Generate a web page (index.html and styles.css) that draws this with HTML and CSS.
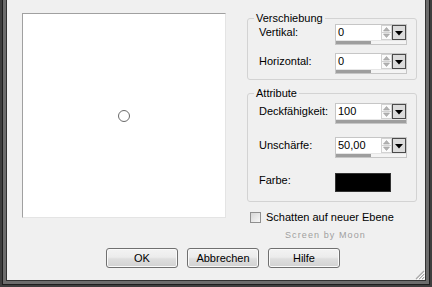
FILE: index.html
```html
<!DOCTYPE html>
<html lang="de">
<head>
<meta charset="utf-8">
<title>Schatten</title>
<link rel="stylesheet" href="styles.css">
</head>
<body>
<div class="window"><div class="frame-a"><div class="frame-b"><div class="client">
  <div class="main">
    <div class="preview">
      <svg class="target" width="14" height="14" viewBox="0 0 14 14"><circle cx="7" cy="7" r="5.5" fill="none" stroke="#6a6a6a" stroke-width="1"/></svg>
    </div>
    <div class="side">
      <fieldset class="group g1">
        <legend>Verschiebung</legend>
        <div class="row">
          <span class="lbl">Vertikal:</span>
          <div class="spin">
            <div class="spin-top">
              <div class="field">0</div>
              <div class="arrows"><svg width="11" height="15" viewBox="0 0 11 15"><rect x="0.5" y="0.5" width="10" height="7" fill="#fbfbfb" stroke="#d2d2d2"/><rect x="0.5" y="7.5" width="10" height="7" fill="#fbfbfb" stroke="#d2d2d2"/><path d="M2.5 6 L5.5 2.5 L8.5 6 Z" fill="#b4b4b4" stroke="#9c9c9c" stroke-width="0.6"/><path d="M2.5 9 L8.5 9 L5.5 12.5 Z" fill="#b4b4b4" stroke="#9c9c9c" stroke-width="0.6"/></svg></div>
              <div class="drop"><svg width="12" height="13" viewBox="0 0 12 13"><path d="M2 5 L10 5 L6 9.5 Z" fill="#000"/></svg></div>
            </div>
            <div class="bar"><div class="fill" style="width:50%"></div></div>
          </div>
        </div>
        <div class="row r-gap1">
          <span class="lbl">Horizontal:</span>
          <div class="spin">
            <div class="spin-top">
              <div class="field">0</div>
              <div class="arrows"><svg width="11" height="15" viewBox="0 0 11 15"><rect x="0.5" y="0.5" width="10" height="7" fill="#fbfbfb" stroke="#d2d2d2"/><rect x="0.5" y="7.5" width="10" height="7" fill="#fbfbfb" stroke="#d2d2d2"/><path d="M2.5 6 L5.5 2.5 L8.5 6 Z" fill="#b4b4b4" stroke="#9c9c9c" stroke-width="0.6"/><path d="M2.5 9 L8.5 9 L5.5 12.5 Z" fill="#b4b4b4" stroke="#9c9c9c" stroke-width="0.6"/></svg></div>
              <div class="drop"><svg width="12" height="13" viewBox="0 0 12 13"><path d="M2 5 L10 5 L6 9.5 Z" fill="#000"/></svg></div>
            </div>
            <div class="bar"><div class="fill" style="width:50%"></div></div>
          </div>
        </div>
      </fieldset>

      <fieldset class="group g2">
        <legend>Attribute</legend>
        <div class="row">
          <span class="lbl">Deckfähigkeit:</span>
          <div class="spin">
            <div class="spin-top">
              <div class="field">100</div>
              <div class="arrows"><svg width="11" height="15" viewBox="0 0 11 15"><rect x="0.5" y="0.5" width="10" height="7" fill="#fbfbfb" stroke="#d2d2d2"/><rect x="0.5" y="7.5" width="10" height="7" fill="#fbfbfb" stroke="#d2d2d2"/><path d="M2.5 6 L5.5 2.5 L8.5 6 Z" fill="#b4b4b4" stroke="#9c9c9c" stroke-width="0.6"/><path d="M2.5 9 L8.5 9 L5.5 12.5 Z" fill="#b4b4b4" stroke="#9c9c9c" stroke-width="0.6"/></svg></div>
              <div class="drop"><svg width="12" height="13" viewBox="0 0 12 13"><path d="M2 5 L10 5 L6 9.5 Z" fill="#000"/></svg></div>
            </div>
            <div class="bar"><div class="fill" style="width:100%"></div></div>
          </div>
        </div>
        <div class="row r-gap2">
          <span class="lbl">Unschärfe:</span>
          <div class="spin">
            <div class="spin-top">
              <div class="field">50,00</div>
              <div class="arrows"><svg width="11" height="15" viewBox="0 0 11 15"><rect x="0.5" y="0.5" width="10" height="7" fill="#fbfbfb" stroke="#d2d2d2"/><rect x="0.5" y="7.5" width="10" height="7" fill="#fbfbfb" stroke="#d2d2d2"/><path d="M2.5 6 L5.5 2.5 L8.5 6 Z" fill="#b4b4b4" stroke="#9c9c9c" stroke-width="0.6"/><path d="M2.5 9 L8.5 9 L5.5 12.5 Z" fill="#b4b4b4" stroke="#9c9c9c" stroke-width="0.6"/></svg></div>
              <div class="drop"><svg width="12" height="13" viewBox="0 0 12 13"><path d="M2 5 L10 5 L6 9.5 Z" fill="#000"/></svg></div>
            </div>
            <div class="bar"><div class="fill" style="width:50%"></div></div>
          </div>
        </div>
        <div class="row r-gap3">
          <span class="lbl lbl-color">Farbe:</span>
          <div class="swatch"></div>
        </div>
      </fieldset>

      <label class="check"><span class="box"></span><span>Schatten auf neuer Ebene</span></label>
      <div class="credit">Screen by Moon</div>
    </div>
  </div>
  <div class="buttons">
    <button class="btn">OK</button>
    <button class="btn">Abbrechen</button>
    <button class="btn">Hilfe</button>
  </div>
  <svg class="grip" width="11" height="11" viewBox="0 0 11 11"><path d="M10 2 L2 10 M10 5 L5 10 M10 8 L8 10" stroke="#a8a8a8" stroke-width="1.2"/><path d="M11 3 L3 11 M11 6 L6 11 M11 9 L9 11" stroke="#ffffff" stroke-width="1"/></svg>
</div></div></div></div>
</body>
</html>
```

FILE: styles.css
```css
* { box-sizing: border-box; }
html, body { margin: 0; padding: 0; }
body {
  width: 432px;
  height: 287px;
  overflow: hidden;
  font-family: "Liberation Sans", Arial, sans-serif;
  font-size: 11px;
  color: #000;
  background: #3e3e3e;
}
.window {
  width: 432px;
  height: 287px;
  border: solid #3e3e3e;
  border-width: 0 2px 2px 2px;
}
.frame-a {
  height: 100%;
  border: solid #1e1e1e;
  border-width: 0 1px 1px 1px;
}
.frame-b {
  height: 100%;
  border: solid #6c6c6c;
  border-width: 0 3px 3px 3px;
}
.client {
  position: relative;
  height: 100%;
  background: #f0f0f0;
  border: solid #333;
  border-width: 0 1px 1px 1px;
}
.main {
  display: flex;
  align-items: flex-start;
  padding: 12px 0 0 15px;
}
.preview {
  width: 204px;
  height: 205px;
  margin-top: 1px;
  background: #fff;
  border-top: 1px solid #a0a0a0;
  border-left: 1px solid #a0a0a0;
  border-right: 1px solid #e4e4e4;
  border-bottom: 1px solid #e4e4e4;
  display: flex;
  align-items: center;
  justify-content: center;
}
.target { display: block; }
.side {
  margin-left: 21px;
  width: 170px;
}
.group {
  margin: 0;
  min-width: 0;
  border: 1px solid #d3d3d3;
  border-radius: 3px;
  padding: 0 0 5px 0;
}
.group legend {
  margin-left: 6px;
  padding: 0 2px;
  font-size: 11px;
  line-height: 12px;
}
.g2 {
  margin-top: 7px;
  padding: 4px 0 9px 0;
}
.row {
  display: flex;
  align-items: flex-start;
  padding-left: 11px;
}
.r-gap1 { margin-top: 8px; }
.r-gap2 { margin-top: 13px; }
.r-gap3 { margin-top: 15px; }
.lbl {
  width: 76px;
  flex: none;
  line-height: 16px;
}
.lbl-color { line-height: 12px; padding-top: 1px; }
.spin {
  width: 72px;
  height: 21px;
  border: 1px solid #c6c6c6;
  background: #fff;
  display: flex;
  flex-direction: column;
}
.spin-top {
  display: flex;
  height: 15px;
}
.field {
  flex: 1;
  padding-left: 2px;
  line-height: 15px;
  background: #fff;
}
.arrows {
  width: 11px;
  height: 15px;
}
.arrows svg, .drop svg { display: block; }
.drop {
  width: 14px;
  height: 15px;
  border: 1px solid #4a4a4a;
  background: #dcdcdc;
}
.bar {
  height: 4px;
  background: #f4f4f4;
  border-top: 1px solid #e6e6e6;
}
.fill {
  height: 100%;
  background: #9e9e9e;
}
.swatch {
  width: 56px;
  height: 19px;
  background: #000;
  border: 1px solid #333;
}
.check {
  display: flex;
  align-items: center;
  margin-top: 8px;
  padding-left: 3px;
  height: 14px;
  line-height: 14px;
}
.box {
  width: 11px;
  height: 11px;
  margin-right: 5px;
  border: 1px solid #8f8f8f;
  background: linear-gradient(135deg, #d6d6d6, #f8f8f8);
}
.credit {
  margin-top: 6px;
  height: 10px;
  padding-left: 38px;
  font-size: 9px;
  line-height: 10px;
  letter-spacing: 1.1px;
  color: #9f9f9f;
}
.buttons {
  display: flex;
  gap: 9px;
  margin-top: 8px;
  padding-left: 99px;
}
.btn {
  width: 72px;
  height: 20px;
  padding: 0;
  margin: 0;
  font-family: "Liberation Sans", Arial, sans-serif;
  font-size: 11px;
  color: #000;
  border: 1px solid #707070;
  border-radius: 3px;
  background: linear-gradient(#f3f3f3 0%, #ececec 45%, #dedede 55%, #d2d2d2 100%);
  box-shadow: inset 0 0 0 1px #fafafa;
}
.grip {
  position: absolute;
  right: 0;
  bottom: 0;
  display: block;
}
```
